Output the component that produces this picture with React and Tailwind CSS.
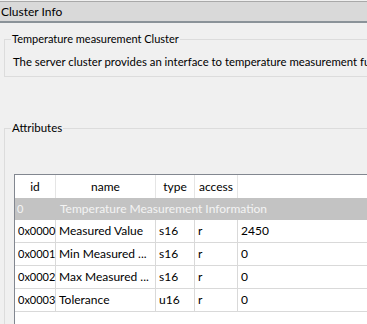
import React from "react";

const rows = [
  ["0x0000", "Measured Value", "s16", "r", "2450"],
  ["0x0001", "Min Measured ...", "s16", "r", "0"],
  ["0x0002", "Max Measured ...", "s16", "r", "0"],
  ["0x0003", "Tolerance", "u16", "r", "0"],
];

export default function App() {
  return (
    <div
      className="w-[367px] h-[324px] overflow-hidden bg-[#f0f0f0] text-[11px] leading-[16px] text-black"
      style={{ fontFamily: 'Lato, "Noto Sans", sans-serif' }}
    >
      <div className="w-[420px] flex flex-col">
        <div className="mt-px h-[22px] bg-[#d9d9d9] border-t border-[#a9a9a9] border-b-2 border-b-[#8b9399] flex items-center pl-[1px] whitespace-nowrap text-[12px]">
          Cluster Info
        </div>
        <fieldset className="ml-[4px] mt-[8px] border border-[#dcdcdc] px-[6px] pb-[6px]">
          <legend className="px-[1px] whitespace-nowrap">Temperature measurement Cluster</legend>
          <div className="mt-[7px] pl-[2px] whitespace-nowrap text-[11.35px]">
            The server cluster provides an interface to temperature measurement functionality
          </div>
        </fieldset>
        <fieldset className="ml-[4px] mt-[43px] border border-[#dcdcdc] pl-[9px] h-[220px]">
          <legend className="ml-[-3px] px-[1px] whitespace-nowrap text-[11.5px]">Attributes</legend>
          <div className="mt-[38px] border-t border-l border-[#828790] bg-white h-[160px] text-[12px]">
            <div className="grid grid-cols-[41px_100px_39px_43px_1fr]">
              {["id", "name", "type", "access", ""].map((h, i) => (
                <div
                  key={i}
                  className="h-[23px] flex items-center justify-center border-r border-[#e5e5e5]"
                >
                  {h}
                </div>
              ))}
            </div>
            <div className="h-[22px] bg-[#c3c3c3] text-[#f4f4f4] grid grid-cols-[41px_1fr] items-center">
              <div className="pl-[2px] text-[11px]">0</div>
              <div className="pl-[4px] whitespace-nowrap">Temperature Measurement Information</div>
            </div>
            {rows.map((r, ri) => (
              <div key={ri} className="grid grid-cols-[41px_100px_39px_43px_1fr]">
                {r.map((c, ci) => (
                  <div
                    key={ci}
                    className={
                      "h-[23px] flex items-center pl-[3px] border-r border-b border-[#d9d9d9] whitespace-nowrap " +
                      (ci === 0 ? "text-[11px] pl-[2px]" : "")
                    }
                  >
                    {c}
                  </div>
                ))}
              </div>
            ))}
          </div>
        </fieldset>
      </div>
    </div>
  );
}
